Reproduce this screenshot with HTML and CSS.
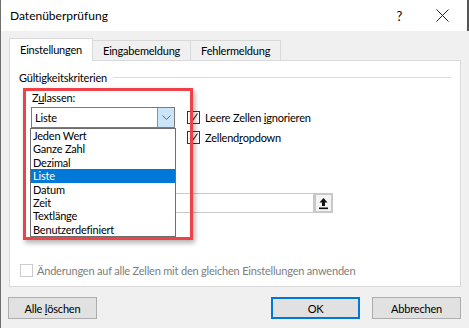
FILE: index.html
```html
<!DOCTYPE html>
<html>
<head>
  <meta charset="UTF-8">
  <title>Datenüberprüfung</title>
  <link rel="stylesheet" href="styles.css">
</head>
<body>
  <div class="window">
    <div class="titlebar">
      <span class="title">Datenüberprüfung</span>
      <span class="help">?</span>
      <svg class="close" width="13" height="13" viewBox="0 0 13 13"><path d="M0.5 0.5 L12.5 12.5 M12.5 0.5 L0.5 12.5" stroke="#222" stroke-width="1"/></svg>
    </div>

    <div class="tabs">
      <div class="tab active">Einstellungen</div>
      <div class="tab">Eingabemeldung</div>
      <div class="tab">Fehlermeldung</div>
    </div>

    <div class="panel">
      <div class="group-head">
        <span>Gültigkeitskriterien</span>
        <div class="group-line"></div>
      </div>

      <div class="criteria">
        <div class="allow">
          <div class="label">Z<u>u</u>lassen:</div>
          <div class="combo">
            <span class="combo-value">Liste</span>
            <span class="combo-btn">
              <svg width="9" height="6" viewBox="0 0 9 6"><path d="M0.5 0.5 L4.5 4.5 L8.5 0.5" fill="none" stroke="#5a6a7a" stroke-width="1"/></svg>
            </span>
          </div>
        </div>
        <div class="options">
          <div class="check-row">
            <span class="check checked"><svg width="11" height="11" viewBox="0 0 11 11"><path d="M2 6 L4.5 8.5 L9.5 1.5" fill="none" stroke="#333" stroke-width="1.2"/></svg></span>
            <span>Leere Zellen <u>i</u>gnorieren</span>
          </div>
          <div class="check-row">
            <span class="check checked"><svg width="11" height="11" viewBox="0 0 11 11"><path d="M2 6 L4.5 8.5 L9.5 1.5" fill="none" stroke="#333" stroke-width="1.2"/></svg></span>
            <span>Zellend<u>r</u>opdown</span>
          </div>
        </div>
      </div>

      <div class="source">
        <div class="source-input"></div>
        <span class="source-btn">
          <svg width="11" height="13" viewBox="0 0 11 13"><path d="M5.5 1 L1.5 5.5 H4 V9 H7 V5.5 H9.5 Z" fill="#111"/><rect x="1" y="10.5" width="9" height="1.6" fill="#111"/></svg>
        </span>
      </div>

      <div class="apply-row">
        <span class="check disabled"></span>
        <span>Änderungen auf alle Zellen mit den gleichen Einstellungen anwenden</span>
      </div>

      <div class="highlight-box"></div>

      <ul class="dropdown">
        <li>Jeden Wert</li>
        <li>Ganze Zahl</li>
        <li>Dezimal</li>
        <li class="selected">Liste</li>
        <li>Datum</li>
        <li>Zeit</li>
        <li>Textlänge</li>
        <li>Benutzerdefiniert</li>
      </ul>
    </div>

    <div class="buttons">
      <button class="btn">Alle <u>l</u>öschen</button>
      <div class="spacer"></div>
      <button class="btn default">OK</button>
      <button class="btn">Abbrechen</button>
    </div>
  </div>
</body>
</html>
```

FILE: styles.css
```css
body {
  margin: 0;
  font-family: Lato, "Noto Sans", sans-serif;
  font-size: 11px;
  letter-spacing: -0.2px;
  color: #000;
  background-color: #f0f0f0;
}

.window {
  width: 469px;
  height: 328px;
  box-sizing: border-box;
  border-left: 1px solid #6e6e6e;
  background-color: #f0f0f0;
  overflow: hidden;
}

.titlebar {
  height: 31px;
  background-color: #fff;
  display: flex;
  align-items: center;
  padding-left: 9px;
  padding-right: 18px;
  border-right: 2px solid #555;
}

.title {
  flex: 1;
  font-size: 12px;
  letter-spacing: 0;
}

.help {
  font-size: 13px;
  margin-right: 34px;
}

.close {
  display: block;
}

.tabs {
  display: flex;
  align-items: flex-end;
  height: 22px;
  margin-top: 7px;
  padding-left: 8px;
}

.tab {
  height: 20px;
  line-height: 19px;
  padding: 0 10px;
  box-sizing: border-box;
  border: 1px solid #d9d9d9;
  border-bottom: none;
  background-color: #f0f0f0;
  margin-right: -1px;
}

.tab.active {
  height: 23px;
  line-height: 22px;
  background-color: #fff;
  position: relative;
  z-index: 1;
  margin-bottom: -1px;
}

.panel {
  position: relative;
  width: 452px;
  height: 227px;
  margin-left: 8px;
  box-sizing: border-box;
  background-color: #fff;
  border: 1px solid #d9d9d9;
  padding: 8px 9px 0 9px;
}

.group-head {
  display: flex;
  align-items: center;
  height: 16px;
}

.group-line {
  flex: 1;
  height: 1px;
  background-color: #dcdcdc;
  margin-left: 6px;
}

.criteria {
  display: flex;
  margin-top: 5px;
  padding-left: 12px;
}

.allow {
  width: 144px;
}

.label {
  height: 16px;
  line-height: 16px;
  padding-left: 1px;
}

.combo {
  display: flex;
  height: 21px;
  margin-top: 1px;
  box-sizing: border-box;
  border: 1px solid #7a7a7a;
}

.combo-value {
  flex: 1;
  line-height: 19px;
  padding-left: 3px;
}

.combo-btn {
  width: 16px;
  display: flex;
  align-items: center;
  justify-content: center;
  background-color: #cce4f7;
  border-left: 1px solid #569de5;
}

.options {
  margin-left: 12px;
  padding-top: 17px;
}

.check-row {
  display: flex;
  align-items: center;
  gap: 5px;
  height: 20px;
}

.check {
  width: 13px;
  height: 13px;
  box-sizing: border-box;
  border: 1px solid #333;
  background-color: #fff;
  display: flex;
  align-items: center;
  justify-content: center;
}

.check.disabled {
  border-color: #cccccc;
}

.source {
  display: flex;
  margin-top: 46px;
  margin-left: 12px;
  width: 302px;
  height: 20px;
}

.source-input {
  flex: 1;
  box-sizing: border-box;
  border: 1px solid #c8c8c8;
}

.source-btn {
  width: 19px;
  box-sizing: border-box;
  border: 2px solid #c8c8c8;
  background-color: #f4f4f4;
  display: flex;
  align-items: center;
  justify-content: center;
}

.apply-row {
  display: flex;
  align-items: center;
  gap: 4px;
  height: 13px;
  margin-top: 51px;
  margin-left: 1px;
  color: #7d7d7d;
}

.highlight-box {
  position: absolute;
  left: 13px;
  top: 27px;
  width: 170px;
  height: 152px;
  box-sizing: border-box;
  border: 3px solid #ef4148;
  box-shadow: 2px 3px 5px rgba(0, 0, 0, 0.3);
}

.dropdown {
  position: absolute;
  left: 20px;
  top: 67px;
  width: 146px;
  box-sizing: border-box;
  margin: 0;
  padding: 0;
  list-style: none;
  background-color: #fff;
  border: 1px solid #6e6e6e;
}

.dropdown li {
  height: 13.4px;
  line-height: 13.4px;
  padding-left: 2px;
}

.dropdown li.selected {
  background-color: #0078d7;
  color: #fff;
}

.buttons {
  display: flex;
  gap: 12px;
  padding: 10px 8px 0 7px;
}

.spacer {
  flex: 1;
}

.btn {
  width: 89px;
  height: 22px;
  font-family: Lato, "Noto Sans", sans-serif;
  font-size: 11px;
  letter-spacing: -0.2px;
  background-color: #e1e1e1;
  border: 1px solid #adadad;
  padding: 0;
}

.btn.default {
  border: 1px solid #0078d7;
  box-shadow: inset 0 0 0 1px #0078d7;
}
```
